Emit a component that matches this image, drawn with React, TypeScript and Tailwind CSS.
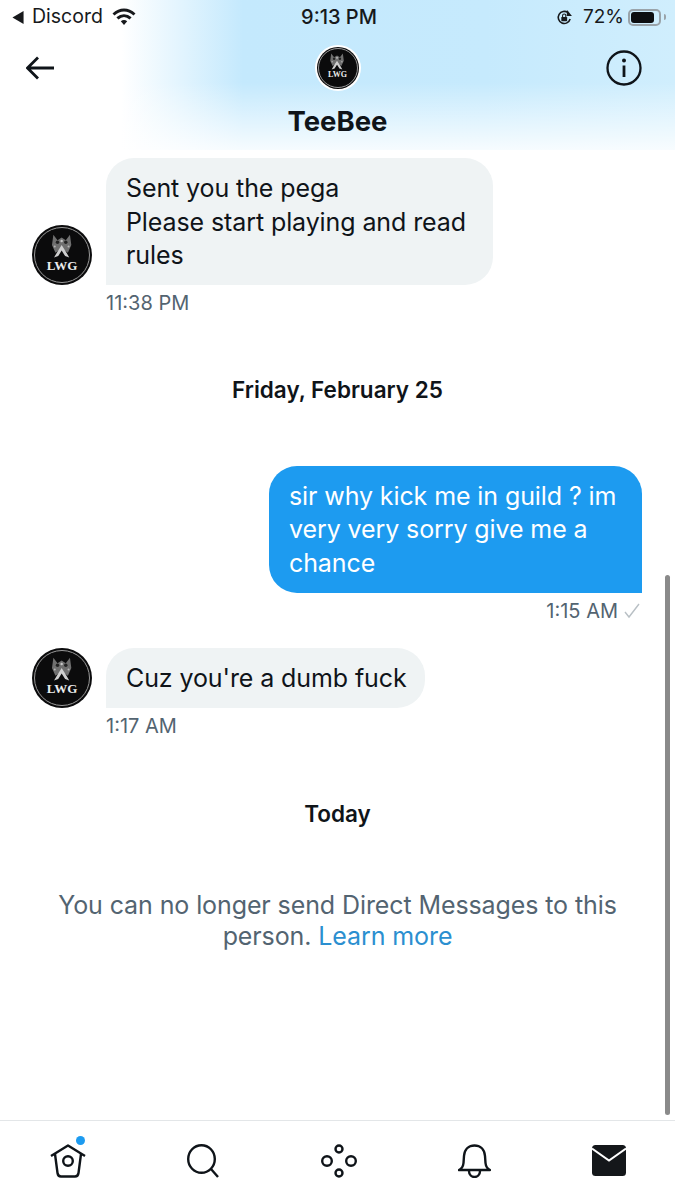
import React from "react";

function LogoAvatar({ size, label, pad }: { size: string; label: string; pad: string }) {
  return (
    <div className={`${size} ${pad} shrink-0 rounded-full bg-[#0b0b0c]`}>
      <div className="flex h-full w-full flex-col items-center rounded-full border border-[#9a9a9a] pt-[11%]">
        <svg viewBox="0 0 40 36" className="h-[52%] w-[58%]">
          <path d="M8 1 14 9 20 5 26 9 32 1 34 16 29 27 20 21 11 27 6 16Z" fill="#6f6f6f" />
          <circle cx="14" cy="12" r="2.500" fill="#222222" />
          <circle cx="26" cy="12" r="2.500" fill="#222222" />
          <circle cx="20" cy="10" r="1.800" fill="#c8c8c8" />
          <circle cx="10" cy="18" r="1.500" fill="#b5b5b5" />
          <circle cx="30" cy="18" r="1.500" fill="#b5b5b5" />
          <path d="M20 16 13 27 9 34 15 32 20 24 25 32 31 34 27 27Z" fill="#cfcfcf" />
          <path d="M20 26 15.500 34H24.500Z" fill="#0b0b0c" />
        </svg>
        <span className={`${label} font-["Liberation_Serif",serif] leading-none font-bold text-[#ececec]`}>LWG</span>
      </div>
    </div>
  );
}

function StatusBar() {
  return (
    <div className="flex h-[34px] items-center justify-between pr-[9px] pl-[12px] text-[#17191c]">
      <div className="flex w-[200px] items-center">
        <svg viewBox="0 0 12 14" className="mr-[8px] h-[13px] w-[12px]"><path d="M12 0V14L0 7Z" fill="#17191c" /></svg>
        <span className="text-[19.500px]">Discord</span>
        <svg viewBox="0 0 24 18" className="ml-[9px] h-[18px] w-[24px]">
          <path d="M1.500 6.500C8 .6 16 .6 22.500 6.500M5.400 10.400c4-3.600 9.200-3.600 13.200 0" fill="none" stroke="#17191c" strokeWidth="3" />
          <path d="M8.800 13.300c2-1.600 4.400-1.600 6.400 0L12 17Z" fill="#17191c" />
        </svg>
      </div>
      <span className="text-[20px] font-medium">9:13 PM</span>
      <div className="flex w-[200px] items-center justify-end">
        <svg viewBox="0 0 16 16" className="mr-[10px] h-[17px] w-[17px]">
          <path d="M13.300 9.500A5.700 5.700 0 1 1 11.300 3.400" fill="none" stroke="#17191c" strokeWidth="1.500" />
          <path d="M10.500 1 15 6.500 10 6.500Z" fill="#17191c" />
          <rect x="5" y="7.500" width="5.500" height="4" rx=".6" fill="#17191c" />
          <path d="M6.200 7.500V6.200a1.500 1.500 0 0 1 3 0V7.500" fill="none" stroke="#17191c" />
        </svg>
        <span className="text-[19px]">72%</span>
        <div className="ml-[4px] flex h-[17px] w-[33px] items-center rounded-[5px] border-2 border-[#9aa3a9] p-[1px]">
          <div className="h-full w-[23px] rounded-[3px] bg-[#0d0e10]" />
        </div>
        <div className="ml-[3px] h-[6px] w-[2px] rounded-r bg-[#9aa3a9]" />
      </div>
    </div>
  );
}

function Header() {
  return (
    <div className="h-[150px] bg-[linear-gradient(180deg,rgba(255,255,255,0)_55%,rgba(255,255,255,0.85)_100%),linear-gradient(90deg,#ffffff_18%,#c4e9fd_36%,#c6eafd_72%,#d0eefd_100%)]">
      <StatusBar />
      <div className="relative flex flex-col items-center">
        <div className="mt-[11px] rounded-full bg-white p-[2px]">
          <LogoAvatar size="h-[42px] w-[42px]" pad="p-[1px]" label="text-[8px]" />
        </div>
        <div className="mt-[14px] text-[27.500px] leading-[32px] font-bold text-[#0f1419]">TeeBee</div>
        <svg viewBox="0 0 28 24" className="absolute top-[22px] left-[26px] h-[24px] w-[28px]">
          <path d="M28 12H2.500M12 1.500 1.500 12 12 22.500" fill="none" stroke="#0f1419" strokeWidth="2.800" />
        </svg>
        <svg viewBox="0 0 36 36" className="absolute top-[16px] right-[33px] h-[36px] w-[36px]">
          <circle cx="18" cy="18" r="16.500" fill="none" stroke="#0f1419" strokeWidth="2.300" />
          <circle cx="18" cy="10.500" r="2" fill="#0f1419" />
          <path d="M18 15.500V27" stroke="#0f1419" strokeWidth="2.800" />
        </svg>
      </div>
    </div>
  );
}

function Received({ lines, time, top, width }: { lines: string[]; time: string; top: string; width: string }) {
  return (
    <div className={top}>
      <div className="flex items-end pl-[32px]">
        <LogoAvatar size="h-[60px] w-[60px]" pad="p-[2px]" label="text-[13px]" />
        <div className={`${width} ml-[14px] rounded-[28px] rounded-bl-none bg-[#eff3f4] pt-[14px] pr-[20px] pb-[12.500px] pl-[20px] text-[25px] leading-[33.500px] tracking-[-0.1px] text-[#0f1419]`}>
          {lines.map((l) => (
            <div key={l} className="whitespace-nowrap">{l}</div>
          ))}
        </div>
      </div>
      <div className="mt-[6px] pl-[106px] text-[20px] leading-[24px] text-[#536471]">{time}</div>
    </div>
  );
}

function DateLabel({ text, top }: { text: string; top: string }) {
  return <div className={`${top} text-center text-[22.500px] leading-[28px] font-semibold text-[#0f1419]`}>{text}</div>;
}

function TabBar() {
  return (
    <div className="flex h-[80px] items-center justify-between border-t border-[#e3e6e8] pr-[49px] pl-[50px]">
      <div className="relative h-[34px] w-[36px]">
        <svg viewBox="0 0 36 34" className="h-full w-full">
          <path d="M1 12 18 1.500 35 12" fill="none" stroke="#0f1419" strokeWidth="2.400" strokeLinejoin="round" />
          <path d="M5 10l2.500 19q.5 3.500 3.500 3.500h14q3 0 3.500-3.500L31 10" fill="none" stroke="#0f1419" strokeWidth="2.400" />
          <circle cx="18" cy="17" r="4.800" fill="none" stroke="#0f1419" strokeWidth="2.400" />
        </svg>
        <div className="absolute -top-[8px] left-[26px] h-[9px] w-[9px] rounded-full bg-[#1d9bf0]" />
      </div>
      <svg viewBox="0 0 32 34" className="h-[34px] w-[32px]">
        <ellipse cx="14.500" cy="15" rx="13.300" ry="13.800" fill="none" stroke="#0f1419" strokeWidth="2.400" />
        <path d="M24 25l7 8" stroke="#0f1419" strokeWidth="2.400" />
      </svg>
      <svg viewBox="0 0 36 34" className="h-[34px] w-[36px]">
        <g fill="none" stroke="#0f1419" strokeWidth="2.400">
          <circle cx="18" cy="5" r="3.500" />
          <circle cx="18" cy="29" r="3.500" />
          <circle cx="6" cy="17" r="4.800" />
          <circle cx="30" cy="17" r="4.800" />
        </g>
      </svg>
      <svg viewBox="0 0 33 34" className="h-[34px] w-[33px]">
        <path d="M1 26h31q-4-2-4.500-7l-.5-7C26.500 5 22 1.500 16.500 1.500S6.500 5 6 12l-.5 7Q5 24 1 26Z" fill="none" stroke="#0f1419" strokeWidth="2.400" strokeLinejoin="round" />
        <path d="M11 27c0 8 11 8 11 0" fill="none" stroke="#0f1419" strokeWidth="2.400" />
      </svg>
      <svg viewBox="0 0 34 31" className="h-[31px] w-[34px]">
        <rect width="34" height="31" rx="3.500" fill="#14171a" />
        <path d="M0 3.500 17 15.500 34 3.500" fill="none" stroke="#ffffff" strokeWidth="2" />
      </svg>
    </div>
  );
}

export default function App() {
  return (
    <div className="relative flex h-[1200px] w-[675px] flex-col overflow-hidden bg-white font-['Inter',sans-serif]">
      <Header />
      <div className="flex-1">
        <Received top="mt-[8px]" width="w-[387px]" lines={["Sent you the pega", "Please start playing and read", "rules"]} time="11:38 PM" />
        <DateLabel top="mt-[61px]" text="Friday, February 25" />
        <div className="mt-[61.500px] flex justify-end pr-[33px]">
          <div className="w-[373px] rounded-[28px] rounded-br-none bg-[#1d9bf0] pt-[14px] pr-[20px] pb-[12.500px] pl-[20px] text-[25px] leading-[33.500px] tracking-[-0.1px] text-white">
            <div>sir why kick me in guild ? im</div>
            <div>very very sorry give me a</div>
            <div>chance</div>
          </div>
        </div>
        <div className="mt-[6px] flex items-center justify-end pr-[35px] text-[20px] leading-[24px] text-[#536471]">
          1:15 AM
          <svg viewBox="0 0 16 16" className="ml-[6px] h-[16px] w-[16px]"><path d="M1 9l4 5L15 1" fill="none" stroke="#b9c0c5" strokeWidth="1.400" /></svg>
        </div>
        <Received top="mt-[25.500px]" width="w-[319px]" lines={["Cuz you're a dumb fuck"]} time="1:17 AM" />
        <DateLabel top="mt-[61.500px]" text="Today" />
        <div className="mt-[62px] text-center text-[25px] leading-[31px] tracking-[-0.1px] text-[#536471]">
          <div>You can no longer send Direct Messages to this</div>
          <div>person. <span className="text-[#2b8fd0]">Learn more</span></div>
        </div>
      </div>
      <TabBar />
      <div className="absolute top-[575px] right-[5px] h-[540px] w-[5px] rounded-full bg-[#8a8a8a]" />
    </div>
  );
}
